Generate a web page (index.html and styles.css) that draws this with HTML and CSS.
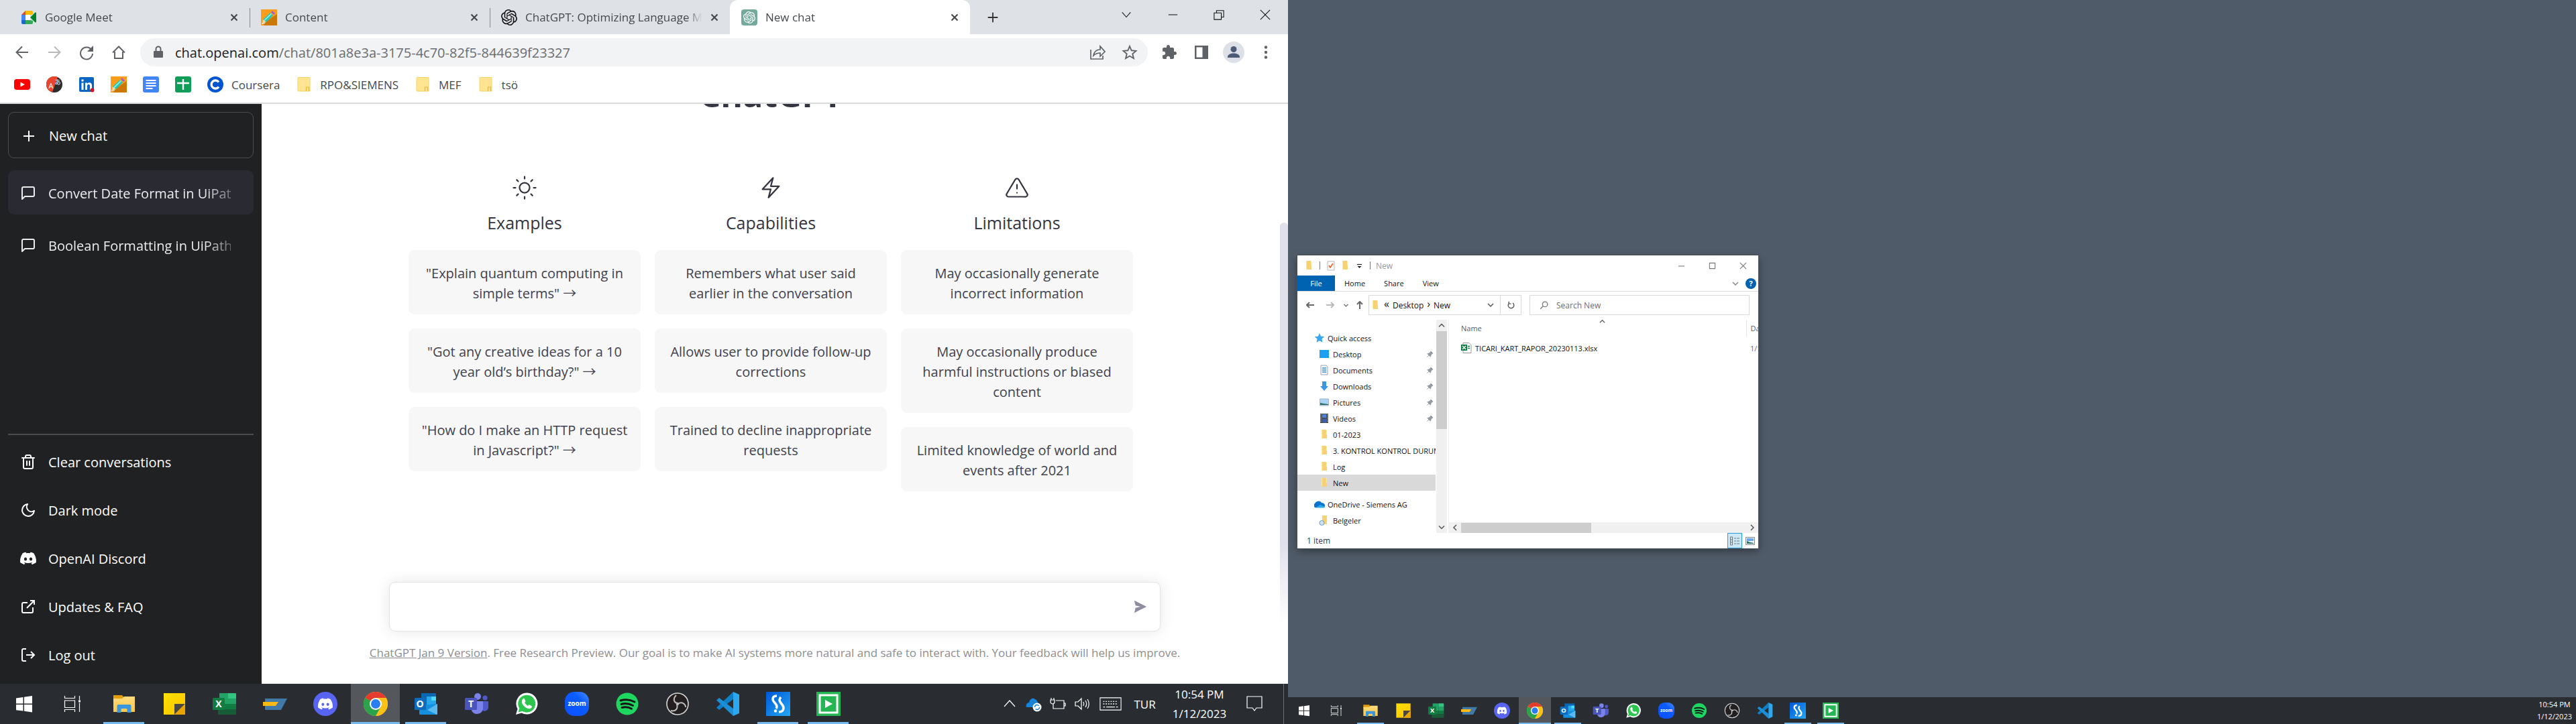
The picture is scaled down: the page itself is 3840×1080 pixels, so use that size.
FILE: index.html
```html
<!DOCTYPE html>
<html lang="en">
<head>
<meta charset="utf-8">
<title>New chat</title>
<link rel="stylesheet" href="styles.css">
</head>
<body>
<svg class="sprite" aria-hidden="true">
  <defs>
    <linearGradient id="g-note" x1="0" y1="0" x2="1" y2="1"><stop offset="0" stop-color="#ffe100"/><stop offset="1" stop-color="#ffc400"/></linearGradient>
    <linearGradient id="g-zoom" x1="1" y1="0" x2="0" y2="1"><stop offset="0" stop-color="#4a90ff"/><stop offset=".35" stop-color="#0b5cff"/><stop offset="1" stop-color="#0b4fff"/></linearGradient>
    <linearGradient id="g-studio" x1="0" y1="0" x2="1" y2="1"><stop offset="0" stop-color="#0057d8"/><stop offset="1" stop-color="#23a8f5"/></linearGradient>
    <linearGradient id="g-folder" x1="0" y1="0" x2="0" y2="1"><stop offset="0" stop-color="#ffdc7c"/><stop offset="1" stop-color="#fbc84b"/></linearGradient>
  </defs>
  <symbol id="i-x" viewBox="0 0 12 12"><path d="M1.500 1.500l9 9M10.500 1.500l-9 9" fill="none" stroke="currentColor" stroke-width="2.200"/></symbol>
  <symbol id="i-plus" viewBox="0 0 24 24"><path d="M12 4v16M4 12h16" fill="none" stroke="currentColor" stroke-width="2"/></symbol>
  <symbol id="i-chat" viewBox="0 0 24 24"><path d="M21 15a2 2 0 0 1-2 2H7l-4 4V5a2 2 0 0 1 2-2h14a2 2 0 0 1 2 2z" fill="none" stroke="currentColor" stroke-width="2" stroke-linejoin="round"/></symbol>
  <symbol id="i-trash" viewBox="0 0 24 24"><path d="M3 6h18M19 6v14a2 2 0 0 1-2 2H7a2 2 0 0 1-2-2V6M8 6V4a2 2 0 0 1 2-2h4a2 2 0 0 1 2 2v2M10 11v6M14 11v6" fill="none" stroke="currentColor" stroke-width="2" stroke-linecap="round"/></symbol>
  <symbol id="i-moon" viewBox="0 0 24 24"><path d="M21 12.790A9 9 0 1 1 11.210 3 7 7 0 0 0 21 12.790z" fill="none" stroke="currentColor" stroke-width="2" stroke-linejoin="round"/></symbol>
  <symbol id="i-discord" viewBox="0 0 24 24"><path fill="currentColor" d="M20.317 4.3698a19.7913 19.7913 0 00-4.8851-1.5152.0741.0741 0 00-.0785.0371c-.211.3753-.4447.8648-.6083 1.2495-1.8447-.2762-3.68-.2762-5.4868 0-.1636-.3933-.4058-.8742-.6177-1.2495a.077.077 0 00-.0785-.037 19.7363 19.7363 0 00-4.8852 1.515.0699.0699 0 00-.0321.0277C.5334 9.0458-.319 13.5799.0992 18.0578a.0824.0824 0 00.0312.0561c2.0528 1.5076 4.0413 2.4228 5.9929 3.0294a.0777.0777 0 00.0842-.0276c.4616-.6304.8731-1.2952 1.226-1.9942a.076.076 0 00-.0416-.1057c-.6528-.2476-1.2743-.5495-1.8722-.8923a.077.077 0 01-.0076-.1277c.1258-.0943.2517-.1923.3718-.2914a.0743.0743 0 01.0776-.0105c3.9278 1.7933 8.18 1.7933 12.0614 0a.0739.0739 0 01.0785.0095c.1202.099.246.1981.3728.2924a.077.077 0 01-.0066.1276 12.2986 12.2986 0 01-1.873.8914.0766.0766 0 00-.0407.1067c.3604.698.7719 1.3628 1.225 1.9932a.076.076 0 00.0842.0286c1.961-.6067 3.9495-1.5219 6.0023-3.0294a.077.077 0 00.0313-.0552c.5004-5.177-.8382-9.6739-3.5485-13.6604a.061.061 0 00-.0312-.0286zM8.02 15.3312c-1.1825 0-2.1569-1.0857-2.1569-2.419 0-1.3332.9555-2.4189 2.157-2.4189 1.2108 0 2.1757 1.0952 2.1568 2.419 0 1.3332-.9555 2.4189-2.1569 2.4189zm7.9748 0c-1.1825 0-2.1569-1.0857-2.1569-2.419 0-1.3332.9554-2.4189 2.1569-2.4189 1.2108 0 2.1757 1.0952 2.1568 2.419 0 1.3332-.946 2.4189-2.1568 2.4189Z"/></symbol>
  <symbol id="i-external" viewBox="0 0 24 24"><path d="M19 13v6a2 2 0 0 1-2 2H5a2 2 0 0 1-2-2V8a2 2 0 0 1 2-2h6M15 3h6v6M10 14L21 3" fill="none" stroke="currentColor" stroke-width="2"/></symbol>
  <symbol id="i-logout" viewBox="0 0 24 24"><path d="M9 21H5a2 2 0 0 1-2-2V5a2 2 0 0 1 2-2h4M16 17l5-5-5-5M21 12H9" fill="none" stroke="currentColor" stroke-width="2"/></symbol>
  <symbol id="i-sun" viewBox="0 0 24 24"><path d="M12 1v2M12 21v2M4.220 4.220l1.420 1.420M18.360 18.360l1.420 1.420M1 12h2M21 12h2M4.220 19.780l1.420-1.420M18.360 5.640l1.420-1.420M17 12a5 5 0 1 1-10 0 5 5 0 0 1 10 0z" fill="none" stroke="currentColor" stroke-width="1.500" stroke-linecap="round"/></symbol>
  <symbol id="i-bolt" viewBox="0 0 24 24"><path d="M3.750 13.500l10.500-11.250L12 10.500h8.250L9.750 21.750 12 13.500H3.750z" fill="none" stroke="currentColor" stroke-width="1.500" stroke-linejoin="round"/></symbol>
  <symbol id="i-warn" viewBox="0 0 24 24"><path d="M10.290 3.860L1.820 18a2 2 0 0 0 1.710 3h16.940a2 2 0 0 0 1.710-3L13.710 3.860a2 2 0 0 0-3.420 0zM12 9v4M12 17h.010" fill="none" stroke="currentColor" stroke-width="1.500" stroke-linecap="round" stroke-linejoin="round"/></symbol>
  <symbol id="i-openai" viewBox="0 0 24 24"><path fill="currentColor" d="M22.2819 9.8211a5.9847 5.9847 0 0 0-.5157-4.9108 6.0462 6.0462 0 0 0-6.5098-2.9A6.0651 6.0651 0 0 0 4.9807 4.1818a5.9847 5.9847 0 0 0-3.9977 2.9 6.0462 6.0462 0 0 0 .7427 7.0966 5.98 5.98 0 0 0 .511 4.9107 6.051 6.051 0 0 0 6.5146 2.9001A5.9847 5.9847 0 0 0 13.2599 24a6.0557 6.0557 0 0 0 5.7718-4.2058 5.9894 5.9894 0 0 0 3.9977-2.9001 6.0557 6.0557 0 0 0-.7475-7.0729zm-9.022 12.6081a4.4755 4.4755 0 0 1-2.8764-1.0408l.1419-.0804 4.7783-2.7582a.7948.7948 0 0 0 .3927-.6813v-6.7369l2.02 1.1686a.071.071 0 0 1 .038.052v5.5826a4.504 4.504 0 0 1-4.4945 4.4944zm-9.6607-4.1254a4.4708 4.4708 0 0 1-.5346-3.0137l.142.0852 4.783 2.7582a.7712.7712 0 0 0 .7806 0l5.8428-3.3685v2.3324a.0804.0804 0 0 1-.0332.0615L9.74 19.9502a4.4992 4.4992 0 0 1-6.1408-1.6464zM2.3408 7.8956a4.485 4.485 0 0 1 2.3655-1.9728V11.6a.7664.7664 0 0 0 .3879.6765l5.8144 3.3543-2.0201 1.1685a.0757.0757 0 0 1-.071 0l-4.8303-2.7865A4.504 4.504 0 0 1 2.3408 7.872zm16.5963 3.8558L13.1038 8.364 15.1192 7.2a.0757.0757 0 0 1 .071 0l4.8303 2.7913a4.4944 4.4944 0 0 1-.6765 8.1042v-5.6772a.79.79 0 0 0-.407-.667zm2.0107-3.0231l-.142-.0852-4.7735-2.7818a.7759.7759 0 0 0-.7854 0L9.409 9.2297V6.8974a.0662.0662 0 0 1 .0284-.0615l4.8303-2.7866a4.4992 4.4992 0 0 1 6.6802 4.66zM8.3065 12.863l-2.02-1.1638a.0804.0804 0 0 1-.038-.0567V6.0742a4.4992 4.4992 0 0 1 7.3757-3.4537l-.142.0805L8.704 5.459a.7948.7948 0 0 0-.3927.6813zm1.0976-2.3654l2.602-1.4998 2.6069 1.4998v2.9994l-2.5974 1.4997-2.6067-1.4997Z"/></symbol>
  <symbol id="i-pencil" viewBox="0 0 24 24"><path d="M0 0h24v24H0z" fill="#fb9c1b"/><path d="M24 7v17H5L3 21z" fill="#cb7806"/><path d="M2 21l1-6 5 4z" fill="#f5deb0"/><path d="M3 15L14 5l4 4L8 19z" fill="#25c7b8"/><path d="M5 16.500L15.500 6.500" stroke="#a8f2e6" stroke-width="1.500"/><path d="M15 4l2-2 4 4-2 2z" fill="#a55bd0"/><path d="M1 21h5" stroke="#fff" stroke-width="1"/></symbol>
  <symbol id="i-bfolder" viewBox="0 0 24 24"><path d="M4 1.500h16a1 1 0 0 1 1 1V22H4a1 1 0 0 1-1-1V2.500a1 1 0 0 1 1-1z" fill="#ffe591" stroke="#f4d262"/><path d="M15.500 22v-6h4v6" fill="#ffe591" stroke="#e5b93a" stroke-width="1.200"/></symbol>
  <symbol id="i-chev" viewBox="0 0 12 12"><path d="M2 4l4 4 4-4" fill="none" stroke="currentColor" stroke-width="1.500"/></symbol>
  <symbol id="i-folder" viewBox="0 0 16 16"><path d="M4 1h6l2 1v12H6l-2-1z" fill="#ffe7a2"/><path d="M5 1h6v7l1 1v5H6l-1 1z" fill="#f7d272"/></symbol>
  <symbol id="i-pin" viewBox="0 0 12 12"><path d="M7.500 1l3.500 3.500-2 .8L7.500 8 7 10 2 5l2-.5L6.700 3zM4.300 7.700L1.500 10.500" fill="#8e9aa6" stroke="#8e9aa6"/></symbol>

  <symbol id="a-start" viewBox="0 0 36 36"><path d="M6 9.400l10.500-1.500v9.600H6zM18 7.700L30 6v11.500H18zM6 19h10.500v9.600L6 27.200zM18 19h12v11.500l-12-1.700z" fill="#fff"/></symbol>
  <symbol id="a-tasks" viewBox="0 0 36 36"><path d="M6.500 6v3.500h15V6M6.500 13h15v10.500h-15zM6.500 30v-3.500h15V30M28.500 6v6M28.500 16.500V30" fill="none" stroke="#fff" stroke-width="1.200"/><path d="M27 12.500h3v3h-3z" fill="#fff"/></symbol>
  <symbol id="a-explorer" viewBox="0 0 36 36"><path d="M2 5h13l2.500 3V12H2z" fill="#e39c0b"/><path d="M2 10h13l3-3h16v23H2z" fill="url(#g-folder)"/><path d="M7.500 31V21a2 2 0 0 1 2-2h17a2 2 0 0 1 2 2v10h-6v-4.500a1.500 1.500 0 0 0-1.500-1.500h-6a1.500 1.500 0 0 0-1.500 1.500V31z" fill="#3a96dd"/></symbol>
  <symbol id="a-notes" viewBox="0 0 36 36"><path d="M2 2h32v32H2z" fill="url(#g-note)"/><path d="M18 34V18h16z" fill="#4a4640"/><path d="M18 34l16-16v16z" fill="#eaa400"/></symbol>
  <symbol id="a-excel" viewBox="0 0 36 36"><path d="M10 2h13v16H10z" fill="#21a366"/><path d="M23 2h11a1 1 0 0 1 1 1v7H23z" fill="#33c481"/><path d="M23 10h12v8H23z" fill="#21a366"/><path d="M10 18h13v8H10z" fill="#107c41"/><path d="M23 18h12v8H23z" fill="#107c41"/><path d="M8 26h27v7a1 1 0 0 1-1 1H9a1 1 0 0 1-1-1z" fill="#185c37"/><rect x="0" y="9" width="18" height="18" rx="1.500" fill="#107c41"/></symbol>
  <symbol id="a-sap" viewBox="0 0 36 36"><path d="M3 10h33l-9 17H3z" fill="#4179a8"/><path d="M0 15h23l-4 6H0z" fill="#fdb913"/></symbol>
  <symbol id="a-discord" viewBox="0 0 36 36"><circle cx="18" cy="18" r="18" fill="#5865f2"/><use href="#i-discord" x="7" y="7" width="22" height="22" color="#fff"/></symbol>
  <symbol id="a-chrome" viewBox="0 0 36 36"><circle cx="18" cy="18" r="18" fill="#fbc116"/><path d="M18 18L2.400 9A18 18 0 0 1 33.600 9z" fill="#e33b2e"/><path d="M2.400 9A18 18 0 0 0 18 36l7.800-13.500z" fill="#2ba24c"/><path d="M18 9h15.600A18 18 0 0 1 18 36l7.800-13.500z" fill="#fbc116"/><circle cx="18" cy="18" r="9" fill="#fff"/><circle cx="18" cy="18" r="7" fill="#2b7cee"/></symbol>
  <symbol id="a-outlook" viewBox="0 0 36 36"><path d="M11 2h22v22H11z" fill="#0a67b2"/><path d="M19 7h14v13H19z" fill="#28a8ea"/><path d="M26 7h7v6h-7z" fill="#50d9ff"/><path d="M8 20l27-2v15a1 1 0 0 1-1 1H9a1 1 0 0 1-1-1z" fill="#1490df"/><path d="M35 18L20 27l14 7 1-1z" fill="#5bb8f0"/><rect x="1" y="9" width="17" height="18" rx="1.500" fill="#0f6cbd"/></symbol>
  <symbol id="a-teams" viewBox="0 0 36 36"><circle cx="20" cy="7" r="5" fill="#7b83eb"/><circle cx="31" cy="9" r="3.600" fill="#5059c9"/><path d="M26 14h9a1 1 0 0 1 1 1v9a6 6 0 0 1-10 3z" fill="#5059c9"/><path d="M11 14h16a1 1 0 0 1 1 1v10a9 9 0 0 1-17 3z" fill="#7b83eb"/><rect x="1" y="9" width="18" height="18" rx="1.500" fill="#4b53bc"/></symbol>
  <symbol id="a-whatsapp" viewBox="0 0 36 36"><path d="M2 34l2.500-8.500A16 16 0 1 1 10.500 31.500z" fill="#fff"/><path d="M5.500 30.500l1.800-5.800A13 13 0 1 1 11.500 28.800z" fill="#2cc64f"/><path d="M12.500 10.500c1-1 2-.8 2.500.3l1.300 3c.2.700-.5 1.500-1.200 2.300 1 2 2.800 3.800 5 4.800.7-.8 1.400-1.900 2.200-1.500l3 1.500c.9.400.6 1.800.1 2.700-1.200 1.700-3.800 2-6 1.200-4.300-1.700-7.500-5-8.500-9-.3-2 .3-4.200 1.600-5.300z" fill="#fff"/></symbol>
  <symbol id="a-zoom" viewBox="0 0 36 36"><rect width="36" height="36" rx="14" fill="url(#g-zoom)"/></symbol>
  <symbol id="a-spotify" viewBox="0 0 36 36"><circle cx="18" cy="18" r="16.500" fill="#1ed760"/><path d="M8 13c7-2.200 14.500-1.500 21 2M9 18.500c6-1.700 12-1 17.500 2M10 23.500c5-1.300 10-.8 14.500 1.700" fill="none" stroke="#191414" stroke-width="2.900" stroke-linecap="round"/></symbol>
  <symbol id="a-obs" viewBox="0 0 36 36"><circle cx="18" cy="18" r="16" fill="#231f20" stroke="#d8d8d8" stroke-width="1.600"/><path d="M18 17c-6-1-7-7-2-12M19 18c5-4 11 0 11 5M17 19c2 6-2 11-9 9" fill="none" stroke="#bdbdbd" stroke-width="2"/><circle cx="18" cy="18" r="2.200" fill="#bdbdbd"/></symbol>
  <symbol id="a-vscode" viewBox="0 0 36 36"><path d="M26 0v11L5 27l-4-3.500z" fill="#0f7fc8"/><path d="M26 36V25L5 9l-4 3.500z" fill="#1a8fd8"/><path d="M26 0l9 4v28l-9 4z" fill="#2ca8f0"/></symbol>
  <symbol id="a-studio" viewBox="0 0 36 36"><path d="M0 0h36v36H0z" fill="url(#g-studio)"/><path d="M16 6c-4 0-6 2-6 5 0 5 6 6 6 11 0 1 0 2-1 3M19 30c5 0 7-3 7-6 0-5-6-7-6-12 0-2 1-3 2-4" fill="none" stroke="#fff" stroke-width="3.600"/><circle cx="14" cy="28.500" r="2.200" fill="#fff"/></symbol>
  <symbol id="a-player" viewBox="0 0 36 36"><path d="M0 0h36v36H0z" fill="#25b552"/><path d="M5 5h26v26H5z" fill="none" stroke="#fff" stroke-width="3"/><path d="M13 12l11 6-11 6z" fill="#fff"/></symbol>
</svg>

<div class="desktop">
  <section class="monitor">
    <div class="browser">
      <header class="chrome">
        <div class="tabs">
          <div class="tab"><svg class="fav" viewBox="0 0 24 24"><path d="M1 8l6-6v6z" fill="#ea4335"/><path d="M7 2h9a2 2 0 0 1 2 2v3l-4 2V8H7z" fill="#fbbc04"/><path d="M1 8h6v8H1z" fill="#4285f4"/><path d="M1 16h6v6H3a2 2 0 0 1-2-2z" fill="#1967d2"/><path d="M7 22v-6h7l4 1v3a2 2 0 0 1-2 2z" fill="#34a853"/><path d="M14 12l7-7c1-.8 2-.5 2 .5v13c0 1-1 1.300-2 .5z" fill="#00832d"/><path d="M7 8h7v8H7z" fill="#fff"/></svg><span class="tab-title">Google Meet</span><button class="plain close" aria-label="Close tab"><svg><use href="#i-x"/></svg></button></div>
          <div class="tab"><svg class="fav"><use href="#i-pencil"/></svg><span class="tab-title">Content</span><button class="plain close" aria-label="Close tab"><svg><use href="#i-x"/></svg></button></div>
          <div class="tab"><svg class="fav"><use href="#i-openai"/></svg><span class="tab-title">ChatGPT: Optimizing Language Models</span><button class="plain close" aria-label="Close tab"><svg><use href="#i-x"/></svg></button></div>
          <div class="tab active"><span class="fav brand"><svg><use href="#i-openai"/></svg></span><span class="tab-title">New chat</span><button class="plain close" aria-label="Close tab"><svg><use href="#i-x"/></svg></button></div>
          <button class="plain newtab" aria-label="New tab"><svg><use href="#i-plus"/></svg></button>
          <div class="winctl">
            <button class="plain" aria-label="Search tabs"><svg viewBox="0 0 18 18"><path d="M2 5l7 8 7-8" class="ln"/></svg></button>
            <button class="plain" aria-label="Minimize"><svg viewBox="0 0 18 18"><path d="M2 9h15" class="ln"/></svg></button>
            <button class="plain" aria-label="Restore"><svg viewBox="0 0 18 18"><path d="M1 6h12v11H1zM5 6V2h12v11h-4" class="ln"/></svg></button>
            <button class="plain" aria-label="Close"><svg viewBox="0 0 18 18"><path d="M1 1l16 16M17 1L1 17" class="ln"/></svg></button>
          </div>
        </div>
        <div class="toolbar">
          <button class="plain tool" aria-label="Back"><svg viewBox="0 0 24 24"><path d="M21 12H4M12 3.500L3.500 12l8.500 8.500" class="ln2"/></svg></button>
          <button class="plain tool dim" aria-label="Forward"><svg viewBox="0 0 24 24"><path d="M3 12h17M12 3.500l8.500 8.500-8.500 8.500" class="ln2"/></svg></button>
          <button class="plain tool" aria-label="Reload"><svg viewBox="0 0 24 24"><path d="M19.500 8.500A9 9 0 1 0 21 14" class="ln2"/><path d="M22 2v9h-9z" fill="currentColor"/></svg></button>
          <button class="plain tool" aria-label="Home"><svg viewBox="0 0 24 24"><path d="M6 11v10h12V11M3 12.500L12 3.500l9 9" class="ln2"/></svg></button>
          <div class="omnibox">
            <svg class="lock" viewBox="0 0 16 20"><path d="M2 8h12a1 1 0 0 1 1 1v8a1 1 0 0 1-1 1H2a1 1 0 0 1-1-1V9a1 1 0 0 1 1-1z" fill="#5f6368"/><path d="M4.500 8V5a3.500 3.500 0 0 1 7 0v3" fill="none" stroke="#5f6368" stroke-width="2"/></svg>
            <a class="url" href="#"><b>chat.openai.com</b>/chat/801a8e3a-3175-4c70-82f5-844639f23327</a>
            <button class="plain tool" aria-label="Share"><svg viewBox="0 0 24 24"><path d="M2 8v14h18v-5M6 17c1-6 5-9 10-9V3l7 8-7 7v-5c-4 0-7 1-10 4z" fill="none" stroke="currentColor" stroke-width="1.700"/></svg></button>
            <button class="plain tool" aria-label="Bookmark"><svg viewBox="0 0 24 24"><path d="M12 3l2.700 6.300 6.800.6-5.200 4.500 1.600 6.700L12 17.500l-5.900 3.600 1.600-6.700L2.500 9.900l6.800-.6z" fill="none" stroke="currentColor" stroke-width="1.900"/></svg></button>
          </div>
          <div class="exts">
            <button class="plain tool" aria-label="Extensions"><svg viewBox="0 0 24 24"><path fill="currentColor" d="M20.500 11H19V7c0-1.100-.9-2-2-2h-4V3.500C13 2.120 11.880 1 10.500 1S8 2.120 8 3.500V5H4c-1.100 0-1.990.9-1.990 2v3.800H3.500c1.490 0 2.700 1.210 2.700 2.700s-1.210 2.700-2.700 2.700H2V20c0 1.100.9 2 2 2h3.800v-1.500c0-1.490 1.210-2.700 2.700-2.700 1.490 0 2.700 1.210 2.700 2.700V22H17c1.100 0 2-.9 2-2v-4h1.500c1.380 0 2.500-1.120 2.500-2.500S21.880 11 20.500 11z"/></svg></button>
            <button class="plain tool" aria-label="Side panel"><svg viewBox="0 0 24 24"><path d="M2 2h20v20H2zM4.500 4.500v15h9v-15z" fill="currentColor" fill-rule="evenodd"/></svg></button>
            <button class="plain tool avatar" aria-label="Profile"><svg viewBox="0 0 24 24"><circle cx="12" cy="7.500" r="4.500" fill="#4d5b76"/><path d="M3 20v-1c0-4 5-5.500 9-5.500s9 1.500 9 5.500v1z" fill="#4d5b76"/></svg></button>
            <button class="plain tool" aria-label="Menu"><svg viewBox="0 0 24 24" fill="currentColor"><circle cx="12" cy="4.500" r="2.200"/><circle cx="12" cy="12" r="2.200"/><circle cx="12" cy="19.500" r="2.200"/></svg></button>
          </div>
        </div>
        <nav class="bookmarks" aria-label="Bookmarks">
          <a href="#" aria-label="YouTube"><svg viewBox="0 0 24 24"><rect y="4" width="24" height="16" rx="4" fill="#f00"/><path d="M9.500 8.500l6.500 3.500-6.500 3.500z" fill="#fff"/></svg></a>
          <a href="#" aria-label="Translate"><svg viewBox="0 0 24 24"><circle cx="12" cy="12" r="12" fill="#2b2b2b"/><path d="M17 1A12 12 0 1 0 9 23.500z" fill="#e8452c"/><text x="7" y="18" text-anchor="middle" font-size="11" class="glyph thin">A</text><text x="17" y="12" text-anchor="middle" font-size="9" class="glyph thin">あ</text></svg></a>
          <a href="#" aria-label="LinkedIn"><svg viewBox="0 0 24 24"><rect x="1" y="1" width="22" height="22" rx="2" fill="#0a66c2"/><path d="M4.500 9.500h3V20h-3zM10 9.500h3V11c1.500-2.500 7-2.500 7 2.500V20h-3v-6c0-3-4-3-4 0v6h-3z" fill="#fff"/><circle cx="6" cy="6" r="1.800" fill="#fff"/><circle cx="20.500" cy="20.500" r="3" fill="#d11124"/></svg></a>
          <a href="#" aria-label="Content"><svg><use href="#i-pencil"/></svg></a>
          <a href="#" aria-label="Docs"><svg viewBox="0 0 24 24"><rect width="24" height="24" rx="3" fill="#4285f4"/><path d="M4.500 6h15M4.500 10h15M4.500 14h15M4.500 18h10" stroke="#fff" stroke-width="1.900"/></svg></a>
          <a href="#" aria-label="Sheets"><svg viewBox="0 0 24 24"><rect width="24" height="24" rx="3" fill="#0f9d58"/><path d="M12 4v16M3 10h18" stroke="#fff" stroke-width="2.400"/></svg></a>
          <a href="#"><svg viewBox="0 0 24 24"><circle cx="12" cy="12" r="12" fill="#0056d2"/><path d="M17 8.500a6 6 0 1 0 0 7" fill="none" stroke="#fff" stroke-width="3.400"/></svg>Coursera</a>
          <a href="#"><svg><use href="#i-bfolder"/></svg>RPO&amp;SIEMENS</a>
          <a href="#"><svg><use href="#i-bfolder"/></svg>MEF</a>
          <a href="#"><svg><use href="#i-bfolder"/></svg>tsö</a>
        </nav>
      </header>

      <div class="page">
        <aside class="sidebar">
          <button class="side-item new"><svg><use href="#i-plus"/></svg>New chat</button>
          <nav class="history" aria-label="Chats">
            <a href="#" class="side-item current"><svg><use href="#i-chat"/></svg><span class="fade">Convert Date Format in UiPath</span></a>
            <a href="#" class="side-item"><svg><use href="#i-chat"/></svg><span class="fade">Boolean Formatting in UiPath</span></a>
          </nav>
          <nav class="menu" aria-label="Account">
            <a href="#" class="side-item"><svg><use href="#i-trash"/></svg>Clear conversations</a>
            <a href="#" class="side-item"><svg><use href="#i-moon"/></svg>Dark mode</a>
            <a href="#" class="side-item"><svg><use href="#i-discord"/></svg>OpenAI Discord</a>
            <a href="#" class="side-item"><svg><use href="#i-external"/></svg>Updates &amp; FAQ</a>
            <a href="#" class="side-item"><svg><use href="#i-logout"/></svg>Log out</a>
          </nav>
        </aside>
        <main class="main">
          <div class="intro">
            <h1>ChatGPT</h1>
            <div class="cols">
              <section>
                <svg><use href="#i-sun"/></svg>
                <h2>Examples</h2>
                <button class="card">"Explain quantum computing in simple terms" →</button>
                <button class="card">"Got any creative ideas for a 10 year old’s birthday?" →</button>
                <button class="card">"How do I make an HTTP request in Javascript?" →</button>
              </section>
              <section>
                <svg><use href="#i-bolt"/></svg>
                <h2>Capabilities</h2>
                <p class="card">Remembers what user said earlier in the conversation</p>
                <p class="card">Allows user to provide follow-up corrections</p>
                <p class="card">Trained to decline inappropriate requests</p>
              </section>
              <section>
                <svg><use href="#i-warn"/></svg>
                <h2>Limitations</h2>
                <p class="card">May occasionally generate incorrect information</p>
                <p class="card">May occasionally produce harmful instructions or biased content</p>
                <p class="card">Limited knowledge of world and events after 2021</p>
              </section>
            </div>
          </div>
          <div class="thumb"></div>
          <form class="composer">
            <input type="text" aria-label="Message">
            <button type="button" class="plain" aria-label="Send"><svg viewBox="0 0 24 24"><path d="M2 2l20 10L2 22l2-8 8-2-8-2z" fill="#8e8ea0"/></svg></button>
          </form>
          <p class="note"><a href="#">ChatGPT Jan 9 Version</a>. Free Research Preview. Our goal is to make AI systems more natural and safe to interact with. Your feedback will help us improve.</p>
        </main>
      </div>
    </div>

    <footer class="taskbar large">
      <button class="sys" aria-label="Start"><svg><use href="#a-start"/></svg></button>
      <button class="sys" aria-label="Task view"><svg><use href="#a-tasks"/></svg></button>
      <div class="apps">
        <button class="open" aria-label="File Explorer"><svg><use href="#a-explorer"/></svg></button>
        <button aria-label="Sticky Notes"><svg><use href="#a-notes"/></svg></button>
        <button aria-label="Excel"><svg viewBox="0 0 36 36"><use href="#a-excel"/><text x="9" y="23" text-anchor="middle" font-size="14" class="glyph">X</text></svg></button>
        <button aria-label="SAP Logon"><svg><use href="#a-sap"/></svg></button>
        <button aria-label="Discord"><svg><use href="#a-discord"/></svg></button>
        <button class="open focus" aria-label="Chrome"><svg><use href="#a-chrome"/></svg></button>
        <button class="open" aria-label="Outlook"><svg viewBox="0 0 36 36"><use href="#a-outlook"/><text x="9" y="23" text-anchor="middle" font-size="14" class="glyph">O</text></svg></button>
        <button aria-label="Teams"><svg viewBox="0 0 36 36"><use href="#a-teams"/><text x="10" y="23" text-anchor="middle" font-size="14" class="glyph">T</text></svg></button>
        <button aria-label="WhatsApp"><svg><use href="#a-whatsapp"/></svg></button>
        <button aria-label="Zoom"><svg viewBox="0 0 36 36"><use href="#a-zoom"/><text x="18" y="21" text-anchor="middle" font-size="10" class="glyph">zoom</text></svg></button>
        <button aria-label="Spotify"><svg><use href="#a-spotify"/></svg></button>
        <button aria-label="OBS Studio"><svg><use href="#a-obs"/></svg></button>
        <button aria-label="Visual Studio Code"><svg><use href="#a-vscode"/></svg></button>
        <button class="open" aria-label="UiPath Studio"><svg><use href="#a-studio"/></svg></button>
        <button class="open" aria-label="Player"><svg><use href="#a-player"/></svg></button>
      </div>
      <div class="tray">
        <button class="plain" aria-label="Hidden icons"><svg viewBox="0 0 24 24"><path d="M4 16l8-9 8 9" class="ln"/></svg></button>
        <button class="plain" aria-label="OneDrive"><svg viewBox="0 0 24 24"><path d="M1 17c-1-4 1-7 4-7 1-5 5-8 9-5 3 1 5 5 5 12z" fill="#1683d8"/><circle cx="17" cy="17" r="6.500" fill="#fff"/><circle cx="17" cy="17" r="3.500" fill="none" stroke="#1683d8" stroke-width="1.600" stroke-dasharray="8 3"/></svg></button>
        <button class="plain" aria-label="Power"><svg viewBox="0 0 24 24"><path d="M9 7h12v12H5v-7M21 11h2v4h-2M2 3v3M6 3v3M1 6h6v3a3 3 0 0 1-6 0z" class="ln"/></svg></button>
        <button class="plain" aria-label="Volume"><svg viewBox="0 0 24 24"><path d="M2 9h4l5-5v16l-5-5H2zM14 9c1 2 1 4 0 6M17 7c2 3 2 7 0 10M20 5c3 4 3 10 0 14" class="ln"/></svg></button>
        <button class="plain wide" aria-label="Keyboard"><svg viewBox="0 0 36 24"><path d="M1 2h34v20H1z" class="ln"/><path d="M6 8h24M6 12h24" stroke="#fff" stroke-width="1.500" stroke-dasharray="2 2"/><path d="M6 17h3M11 17h14M27 17h3" class="ln"/></svg></button>
        <span class="lang">TUR</span>
        <time class="clock">10:54 PM<br>1/12/2023</time>
        <button class="plain note-btn" aria-label="Notifications"><svg viewBox="0 0 24 24"><path d="M1 1h22v17h-8l-3 4-3-4H1z" class="ln"/></svg></button>
      </div>
    </footer>
  </section>

  <section class="monitor second">
    <article class="explorer">
      <header class="ex-title">
        <svg><use href="#i-folder"/></svg><i class="bar"></i>
        <svg viewBox="0 0 16 16"><path d="M3 2h10v13H3z" fill="#fff" stroke="#b5b5b5"/><path d="M5 8l2 3 4-6" fill="none" stroke="#e8682c" stroke-width="1.800"/></svg>
        <svg><use href="#i-folder"/></svg>
        <svg viewBox="0 0 16 16"><path d="M5 6.500h7" stroke="#222" stroke-width="1.200"/><path d="M5.500 9h6l-3 3z" fill="#222"/></svg><i class="bar"></i>
        <span class="ex-name">New</span>
        <div class="ex-ctl">
          <button class="plain" aria-label="Minimize"><svg viewBox="0 0 12 12"><path d="M1 6.500h10" class="ln"/></svg></button>
          <button class="plain" aria-label="Maximize"><svg viewBox="0 0 12 12"><path d="M1.500 1.500h9v9h-9z" class="ln"/></svg></button>
          <button class="plain" aria-label="Close"><svg viewBox="0 0 12 12"><path d="M1 1l10 10M11 1L1 11" class="ln"/></svg></button>
        </div>
      </header>
      <nav class="ribbon" aria-label="Ribbon">
        <button class="file">File</button><button>Home</button><button>Share</button><button>View</button>
        <svg class="exp"><use href="#i-chev"/></svg>
        <svg class="help" viewBox="0 0 16 16"><circle cx="8" cy="8" r="8" fill="#0063b1"/><text x="8" y="12" text-anchor="middle" font-size="11" class="glyph">?</text></svg>
      </nav>
      <div class="address">
        <div class="arrows">
          <button class="plain" aria-label="Back"><svg viewBox="0 0 12 12"><path d="M12 6H1M5 2L1 6l4 4" class="ln2"/></svg></button>
          <button class="plain dim" aria-label="Forward"><svg viewBox="0 0 12 12"><path d="M0 6h11M7 2l4 4-4 4" class="ln2"/></svg></button>
          <button class="plain small" aria-label="Recent"><svg><use href="#i-chev"/></svg></button>
          <button class="plain up-btn" aria-label="Up"><svg viewBox="0 0 12 12"><path d="M6 12V1M2 5l4-4 4 4" class="ln2"/></svg></button>
        </div>
        <div class="crumbs">
          <svg><use href="#i-folder"/></svg><span class="sep">«</span><a href="#">Desktop</a><span class="sep">›</span><a href="#">New</a>
          <svg class="drop"><use href="#i-chev"/></svg>
          <button class="plain refresh" aria-label="Refresh"><svg viewBox="0 0 12 12"><path d="M8.500 2.800A4 4 0 1 1 3.300 3M3 .8v3h3" fill="none" stroke="#555" stroke-width="1.300"/></svg></button>
        </div>
        <label class="search"><svg viewBox="0 0 12 12"><circle cx="7.500" cy="4.500" r="3.500" class="ln"/><path d="M5 7l-4 4" class="ln"/></svg><input type="text" placeholder="Search New" aria-label="Search New"></label>
      </div>
      <div class="panes">
        <ul class="tree">
          <li class="root"><svg viewBox="0 0 16 16"><path d="M8 1l2.200 4.800 5 .5-3.800 3.400 1.200 5.100L8 12.200l-4.600 2.600 1.200-5.100L.8 6.300l5-.5z" fill="#3ba7ec"/></svg>Quick access</li>
          <li><svg viewBox="0 0 16 16"><path d="M1 2h14v12H1z" fill="#1ba0f2"/></svg>Desktop<svg class="pin"><use href="#i-pin"/></svg></li>
          <li><svg viewBox="0 0 16 16"><path d="M3 1h8l2 2v12H3z" fill="#f4f6f8" stroke="#9aa5b0"/><path d="M5 5h6M5 8h6M5 11h6" stroke="#3c8ed0" stroke-width="1.300"/></svg>Documents<svg class="pin"><use href="#i-pin"/></svg></li>
          <li><svg viewBox="0 0 16 16"><path d="M5 1h6v7h3l-6 7-6-7h3z" fill="#3d96e0"/></svg>Downloads<svg class="pin"><use href="#i-pin"/></svg></li>
          <li><svg viewBox="0 0 16 16"><path d="M1.500 3h13v10h-13z" fill="#a9d4f7" stroke="#a8b3bd"/><path d="M2 12V9l5 1 7 1v1z" fill="#2d6e62"/></svg>Pictures<svg class="pin"><use href="#i-pin"/></svg></li>
          <li><svg viewBox="0 0 16 16"><path d="M2 1h12v14H2z" fill="#4a4f57"/><path d="M5 2h6v5H5z" fill="#4d84d8"/><path d="M5 9h6v5H5z" fill="#3c62b8"/><path d="M3 2v12M13 2v12" stroke="#ccc" stroke-dasharray="1 1"/></svg>Videos<svg class="pin"><use href="#i-pin"/></svg></li>
          <li><svg><use href="#i-folder"/></svg>01-2023</li>
          <li><svg><use href="#i-folder"/></svg>3. KONTROL KONTROL DURUM</li>
          <li><svg><use href="#i-folder"/></svg>Log</li>
          <li class="sel"><svg><use href="#i-folder"/></svg>New</li>
          <li class="root drive"><svg viewBox="0 0 16 16"><path d="M1 13a4 4 0 0 1 0-6c2-4 8-5 10-1 3 0 5 2 5 4s-1 3-2 3z" fill="#0a74cf"/><path d="M2 13.500L9 9l7 3c0 1-1 1.500-2 1.500z" fill="#2aa9ee"/></svg>OneDrive - Siemens AG</li>
          <li><svg viewBox="0 0 16 16"><path d="M5 1h7v13H5z" fill="#f7d272"/><circle cx="4.500" cy="12" r="3.500" fill="#cfe4f7" stroke="#5b9bd5"/></svg>Belgeler</li>
        </ul>
        <div class="vbar"><svg class="up"><use href="#i-chev"/></svg><div class="vthumb"></div><svg class="down"><use href="#i-chev"/></svg></div>
        <div class="files">
          <table>
            <thead><tr><th>Name</th><th>Date modified</th></tr></thead>
            <tbody><tr><td><span class="cell"><svg viewBox="0 0 16 16"><path d="M3 .5h9l3 3v12H3z" fill="#fff" stroke="#9a9a9a"/><path d="M0 3h9v9H0z" fill="#107c41"/><path d="M2 5l5 5M7 5l-5 5" stroke="#fff" stroke-width="1.500"/><path d="M10 5.500h3M10 8.500h3" stroke="#107c41" stroke-width="1.500"/></svg>TICARI_KART_RAPOR_20230113.xlsx</span></td><td>1/12/2023</td></tr></tbody>
          </table>
          <svg class="sort"><use href="#i-chev"/></svg>
          <div class="hbar"><svg class="left"><use href="#i-chev"/></svg><div class="hthumb"></div><svg class="right"><use href="#i-chev"/></svg></div>
        </div>
      </div>
      <footer class="status">
        <span>1 item</span>
        <button class="view on" aria-label="Details view"><svg viewBox="0 0 16 16"><path d="M1.500 2h3v12h-3zM1.500 6h3M1.500 10h3M7 4h3M11 4h4M7 8h3M11 8h4M7 12h3M11 12h4" fill="none" stroke="#777"/></svg></button>
        <button class="view" aria-label="Large icons view"><svg viewBox="0 0 16 16"><path d="M1.500 2.500h13v11h-13z" fill="#eef5ff" stroke="#8a8a8a"/><path d="M3 4h10v4H3z" fill="#6aa5ee"/><path d="M3 12V8l5 2 5 1v1z" fill="#2d6e62"/></svg></button>
      </footer>
    </article>

    <footer class="taskbar">
      <button class="sys" aria-label="Start"><svg><use href="#a-start"/></svg></button>
      <button class="sys" aria-label="Task view"><svg><use href="#a-tasks"/></svg></button>
      <div class="apps">
        <button class="open" aria-label="File Explorer"><svg><use href="#a-explorer"/></svg></button>
        <button aria-label="Sticky Notes"><svg><use href="#a-notes"/></svg></button>
        <button aria-label="Excel"><svg viewBox="0 0 36 36"><use href="#a-excel"/><text x="9" y="23" text-anchor="middle" font-size="14" class="glyph">X</text></svg></button>
        <button aria-label="SAP Logon"><svg><use href="#a-sap"/></svg></button>
        <button aria-label="Discord"><svg><use href="#a-discord"/></svg></button>
        <button class="open focus" aria-label="Chrome"><svg><use href="#a-chrome"/></svg></button>
        <button class="open" aria-label="Outlook"><svg viewBox="0 0 36 36"><use href="#a-outlook"/><text x="9" y="23" text-anchor="middle" font-size="14" class="glyph">O</text></svg></button>
        <button aria-label="Teams"><svg viewBox="0 0 36 36"><use href="#a-teams"/><text x="10" y="23" text-anchor="middle" font-size="14" class="glyph">T</text></svg></button>
        <button aria-label="WhatsApp"><svg><use href="#a-whatsapp"/></svg></button>
        <button aria-label="Zoom"><svg viewBox="0 0 36 36"><use href="#a-zoom"/><text x="18" y="21" text-anchor="middle" font-size="10" class="glyph">zoom</text></svg></button>
        <button aria-label="Spotify"><svg><use href="#a-spotify"/></svg></button>
        <button aria-label="OBS Studio"><svg><use href="#a-obs"/></svg></button>
        <button aria-label="Visual Studio Code"><svg><use href="#a-vscode"/></svg></button>
        <button class="open" aria-label="UiPath Studio"><svg><use href="#a-studio"/></svg></button>
        <button class="open" aria-label="Player"><svg><use href="#a-player"/></svg></button>
      </div>
      <div class="tray"><time class="clock">10:54 PM<br>1/12/2023</time></div>
    </footer>
  </section>
</div>
</body>
</html>
```
FILE: styles.css
```css
* { box-sizing: border-box; }
body { margin: 0; font-family: "Open Sans", "Noto Sans", "Noto Sans CJK JP", sans-serif; font-size: 20px; color: #343541; }
button, input { font: inherit; color: inherit; }
a { color: inherit; text-decoration: none; }
svg { display: block; flex: none; }
h1, h2, p, ul { margin: 0; padding: 0; }
.sprite { position: absolute; width: 0; height: 0; }
.plain { display: flex; align-items: center; justify-content: center; padding: 0; border: 0; background: none; }
.ln { fill: none; stroke: currentColor; stroke-width: 1.2; }
.ln2 { fill: none; stroke: currentColor; stroke-width: 2; }
.glyph { fill: #fff; font-weight: 700; }
.glyph.thin { font-weight: 400; }

.desktop { display: grid; grid-template-columns: 1fr 1fr; min-height: 100vh; background: #505b69; }
.monitor { display: flex; flex-direction: column; min-width: 0; position: relative; }
.second { justify-content: flex-end; }
.browser { flex: 1; display: flex; flex-direction: column; background: #fff; }

/* Browser frame */
.chrome { border-bottom: 2px solid #d9dadc; color: #45494d; }
.tabs { display: flex; height: 51px; padding-left: 14px; background: #dee1e6; font-size: 17px; }
.tab { display: flex; align-items: center; gap: 12px; flex: 0 1 358px; min-width: 0; padding: 0 17px; position: relative; }
.tab + .tab:not(.active)::before { content: ""; position: absolute; left: 0; top: 12px; height: 29px; width: 1px; background: #85888d; }
.tab.active { background: #fff; border-radius: 12px 12px 0 0; }
.fav { width: 24px; height: 24px; flex: none; color: #111; }
.fav.brand { display: flex; align-items: center; justify-content: center; background: #74aa9c; border-radius: 4px; color: #fff; }
.fav.brand svg { width: 18px; height: 18px; }
.tab-title { flex: 1; overflow: hidden; white-space: nowrap; -webkit-mask-image: linear-gradient(to left, transparent, #000 24px); mask-image: linear-gradient(to left, transparent, #000 24px); }
.close svg { width: 12px; height: 12px; }
.newtab { width: 68px; color: #333; }
.newtab svg { width: 22px; height: 22px; }
.winctl { display: flex; margin-left: auto; height: 44px; color: #111; }
.winctl .plain { width: 69px; }
.winctl svg { width: 16px; height: 16px; }
.toolbar { display: flex; align-items: center; height: 54px; padding: 0 9px; color: #5f6368; }
.tool { width: 48px; height: 42px; }
.tool svg { width: 24px; height: 24px; }
.dim { opacity: .45; }
.omnibox { display: flex; align-items: center; flex: 1; height: 42px; margin: 0 8px; padding: 0 3px 0 19px; border-radius: 21px; background: #f1f3f4; }
.lock { width: 16px; height: 20px; margin-right: 17px; }
.url { flex: 1; color: #6a6d72; overflow: hidden; white-space: nowrap; }
.url b { font-weight: 400; color: #202124; }
.exts { display: flex; }
.avatar svg { box-sizing: content-box; padding: 4px; border-radius: 50%; background: #dde1e7; }
.bookmarks { display: flex; align-items: center; gap: 24px; height: 48px; padding: 0 21px 6px; font-size: 17px; }
.bookmarks a { display: flex; align-items: center; gap: 12px; }
.bookmarks svg { width: 24px; height: 24px; }

/* Chat page */
.page { flex: 1; display: grid; grid-template-columns: 390px 1fr; }
.sidebar { display: flex; flex-direction: column; padding: 12px 12px 8px; background: #202123; color: #fff; }
.side-item { display: flex; align-items: center; gap: 18px; height: 72px; padding: 2px 18px 0; border-radius: 9px; }
.side-item svg { width: 24px; height: 24px; }
.side-item.new { height: 69px; background: none; border: 1px solid #4d4d4f; text-align: left; }
.history { display: flex; flex-direction: column; gap: 12px; margin-top: 18px; color: #ececf1; }
.history .side-item { height: 66px; }
.current { background: #2a2b32; }
.fade { width: 272px; overflow: hidden; white-space: nowrap; -webkit-mask-image: linear-gradient(to left, rgba(0,0,0,.35), #000 40px); mask-image: linear-gradient(to left, rgba(0,0,0,.35), #000 40px); }
.menu { margin-top: auto; padding-top: 3px; border-top: 2px solid #4d4d4f; }
.main { display: flex; flex-direction: column; min-width: 0; position: relative; }
.intro { flex: 1; display: flex; flex-direction: column; align-items: center; padding-right: 12px; overflow: hidden; }
h1 { height: 12px; margin-bottom: 95px; display: flex; flex-direction: column; justify-content: flex-end; font-size: 50px; font-weight: 700; line-height: 52px; }
.cols { display: grid; grid-template-columns: repeat(3, 346px); gap: 21px; }
.cols section { display: flex; flex-direction: column; align-items: center; gap: 21px; }
.cols section > svg { width: 36px; height: 36px; margin-bottom: -9px; }
h2 { font-size: 25px; font-weight: 400; line-height: 40px; padding-top: 2px; }
.card { width: 100%; padding: 20px 18px 16px; border: 0; border-radius: 9px; background: #f7f7f8; text-align: center; line-height: 30px; color: #40414d; }
/* overlay scrollbar thumb */
.thumb { position: absolute; right: 0; top: 177px; bottom: 90px; width: 12px; border-radius: 6px 6px 0 0; background: linear-gradient(#e0e0ea 80%, #fff); }
.composer { display: flex; align-items: center; align-self: center; width: 1150px; max-width: 96%; height: 74px; border: 1px solid #e3e3e5; border-radius: 9px; box-shadow: 0 0 22px rgba(0,0,0,.1); background: #fff; padding: 6px 18px; }
.composer input { flex: 1; height: 100%; border: 0; outline: 0; background: none; }
.composer svg { width: 22px; height: 22px; }
.note { align-self: center; padding: 18px 0 32px; font-size: 17px; line-height: 28px; color: #8e8e92; white-space: nowrap; }
.note a { text-decoration: underline; }

/* Taskbars */
.taskbar { display: flex; height: 40px; background: #292d31; color: #fff; font-size: 11px; }
.taskbar button { display: flex; align-items: center; justify-content: center; padding: 0; border: 0; background: none; position: relative; color: #fff; }
.sys, .apps button { width: 48px; }
.sys svg, .apps svg { width: 24px; height: 24px; }
.apps { display: flex; gap: 1px; margin-left: 3px; }
.open::after { content: ""; position: absolute; left: 4px; right: 4px; bottom: 0; height: 2px; background: #76b9ed; }
.taskbar .focus { background: #54585c; }
.focus::after { left: 0; right: 0; }
.tray { display: flex; align-items: center; margin-left: auto; padding-right: 6px; }
.clock { text-align: center; line-height: 18px; }
.large { height: 60px; font-size: 17px; }
.large .sys { width: 72px; }
.large .apps button { width: 73px; }
.large .sys svg, .large .apps svg { width: 36px; height: 36px; }
.large .apps { gap: 2px; margin-left: 4px; }
.large .open::after { left: 6px; right: 6px; height: 3px; }
.large .focus::after { left: 0; right: 0; }
.large .tray .plain { width: 36px; }
.large .tray .wide { width: 48px; }
.large .tray svg { width: 24px; height: 24px; }
.large .tray .wide svg { width: 33px; }
.lang { width: 39px; text-align: center; margin-left: 8px; }
.large .clock { line-height: 29px; width: 100px; margin: 0 12px; }
.large .tray .note-btn { width: 64px; height: 60px; border-right: 1px solid #6c7074; padding: 0 32px 0 8px; }

/* Explorer window */
.explorer { position: absolute; left: 14px; top: 381px; width: 687px; height: 437px; display: flex; flex-direction: column; background: #fff; box-shadow: 0 0 0 1px #4a5058, 0 4px 12px rgba(0,0,0,.4); font-size: 11px; color: #111; overflow: hidden; }
.explorer svg { width: 16px; height: 16px; }
.ex-title { display: flex; align-items: center; height: 30px; padding-left: 9px; color: #999; gap: 5px; font-size: 12px; }
.bar { width: 1px; height: 12px; margin: 0 3px; background: #777; }
.ex-ctl { display: flex; margin-left: auto; color: #777; }
.ex-ctl .plain { width: 46px; }
.ex-ctl svg { width: 11px; height: 11px; }
.ribbon { display: flex; align-items: center; height: 24px; border-bottom: 1px solid #dadbdc; }
.ribbon button { height: 23px; padding: 0 14px; border: 0; background: none; }
.ribbon .file { width: 56px; background: #0063b1; color: #fff; }
.ribbon .exp { width: 12px; height: 12px; margin: 0 9px 0 auto; color: #888; }
.help { margin-right: 3px; }
.address { display: flex; align-items: center; padding: 5px 13px 7px 0; font-size: 12px; }
.arrows { display: flex; width: 106px; color: #666; align-items: center; padding-left: 4px; }
.arrows .plain { width: 30px; height: 30px; }
.arrows .small { width: 16px; }
.arrows .up-btn { width: 26px; }
.arrows svg { width: 12px; height: 12px; }
.arrows .small svg { width: 9px; height: 9px; }
.crumbs { display: flex; align-items: center; gap: 5px; width: 228px; height: 30px; padding-left: 1px; border: 1px solid #d9d9d9; }
.crumbs .sep { font-size: 16px; line-height: 20px; padding-bottom: 4px; }
.crumbs .drop { width: 12px; height: 12px; margin: 0 3px 0 auto; color: #555; }
.refresh { width: 31px; height: 28px; border-left: 1px solid #d9d9d9; }
.refresh svg { width: 13px; height: 13px; }
.search { display: flex; align-items: center; flex: 1; height: 30px; margin-left: 12px; padding-left: 14px; gap: 12px; border: 1px solid #d9d9d9; color: #777; }
.search svg { width: 13px; height: 13px; }
.search input { flex: 1; min-width: 0; border: 0; padding: 0; outline: 0; }
.search input::placeholder { color: #6d6d6d; opacity: 1; }
.panes { flex: 1; display: grid; grid-template-columns: 206px 19px 1fr; min-height: 0; }
.tree { list-style: none; padding-top: 15px; overflow: hidden; }
.tree li { display: flex; align-items: center; gap: 5px; height: 24px; padding-left: 32px; white-space: nowrap; }
.tree .root { padding-left: 25px; gap: 4px; }
.tree .drive { margin-top: 8px; }
.tree .sel { background: #d9d9d9; }
.tree .pin { width: 11px; height: 11px; margin: 0 3px 0 auto; }
.vbar { display: flex; flex-direction: column; align-items: center; width: 16px; margin-left: 1px; background: #f0f0f0; color: #555; }
.vbar svg { width: 12px; height: 17px; }
.up { transform: rotate(180deg); }
.vthumb { width: 100%; height: 146px; background: #cdcdcd; }
.vbar .down { margin-top: auto; }
.files { display: flex; flex-direction: column; min-width: 0; overflow: hidden; position: relative; border-left: 1px solid #eee; }
.files table { width: 600px; border-collapse: collapse; table-layout: fixed; margin-left: 18px; }
.files th { text-align: left; font-weight: 400; height: 25px; padding: 0; color: #4c607a; }
.files th:first-child { width: 425px; border-right: 1px solid #e5e5e5; }
.files th + th, .files td + td { padding-left: 6px; }
.files td { height: 34px; padding: 0; }
.files td + td { color: #6d6d6d; }
.cell { display: flex; align-items: center; gap: 5px; }
.explorer .sort { position: absolute; left: 223px; top: -3px; width: 11px; height: 11px; transform: rotate(180deg); color: #666; }
.hbar { display: flex; align-items: center; height: 16px; margin-top: auto; background: #f0f0f0; color: #555; }
.hbar svg { width: 18px; height: 12px; }
.hthumb { width: 194px; height: 15px; background: #cdcdcd; }
.left { transform: rotate(90deg); }
.right { transform: rotate(-90deg); margin-left: auto; }
.status { display: flex; align-items: center; height: 23px; padding-left: 14px; color: #1e3a66; font-size: 12px; }
.status span { flex: 1; }
.view { display: flex; align-items: center; justify-content: center; width: 22px; height: 23px; padding: 0; border: 0; background: none; }
.view.on { background: #cce8f6; border: 1px solid #26a0da; }
.view + .view { width: 24px; }
```
